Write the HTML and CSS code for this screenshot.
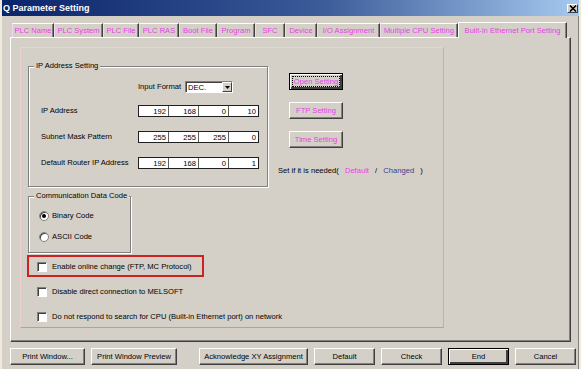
FILE: index.html
```html
<!DOCTYPE html>
<html>
<head>
<meta charset="utf-8">
<link rel="stylesheet" href="styles.css">
</head>
<body>
<div class="win">
  <div class="titlebar">
    <span class="title">Q Parameter Setting</span>
    <span class="close"><svg width="8" height="7" viewBox="0 0 8 7"><path d="M1 0.5 L7 6.5 M7 0.5 L1 6.5" stroke="#000" stroke-width="1.6"/></svg></span>
  </div>
  <div class="tabs">
    <div class="tab">PLC Name</div>
    <div class="tab">PLC System</div>
    <div class="tab">PLC File</div>
    <div class="tab">PLC RAS</div>
    <div class="tab">Boot File</div>
    <div class="tab">Program</div>
    <div class="tab">SFC</div>
    <div class="tab">Device</div>
    <div class="tab">I/O Assignment</div>
    <div class="tab">Multiple CPU Setting</div>
    <div class="tab active">Built-in Ethernet Port Setting</div>
  </div>
  <div class="panel">
    <div class="frame">
      <div class="toprow">
        <div class="grp ipgrp">
          <div class="lg">IP Address Setting</div>
          <div class="fmtrow">
            <span>Input Format</span>
            <span class="combo"><span class="cval">DEC.</span><span class="carrow"><svg width="5" height="3" viewBox="0 0 5 3"><path d="M0 0 H5 L2.5 3 Z" fill="#000"/></svg></span></span>
          </div>
          <div class="iprows">
            <span class="iplbl">IP Address</span>
            <span class="octs"><span class="oct">192</span><span class="oct">168</span><span class="oct">0</span><span class="oct">10</span></span>
            <span class="iplbl">Subnet Mask Pattern</span>
            <span class="octs"><span class="oct">255</span><span class="oct">255</span><span class="oct">255</span><span class="oct">0</span></span>
            <span class="iplbl">Default Router IP Address</span>
            <span class="octs"><span class="oct">192</span><span class="oct">168</span><span class="oct">0</span><span class="oct">1</span></span>
          </div>
        </div>
        <div class="side">
          <div class="sbtn focus"><span class="ftext">Open Setting</span></div>
          <div class="sbtn">FTP Setting</div>
          <div class="sbtn">Time Setting</div>
          <div class="note">Set if it is needed( <span class="def">Default</span> / <span class="chg">Changed</span> )</div>
        </div>
      </div>
      <div class="grp commgrp">
        <div class="lg">Communication Data Code</div>
        <div class="radio"><span class="rb on"></span><span>Binary Code</span></div>
        <div class="radio"><span class="rb"></span><span>ASCII Code</span></div>
      </div>
      <div class="hl">
        <div class="chk"><span class="cb"></span><span>Enable online change (FTP, MC Protocol)</span></div>
      </div>
      <div class="chk row2"><span class="cb"></span><span>Disable direct connection to MELSOFT</span></div>
      <div class="chk row3"><span class="cb"></span><span>Do not respond to search for CPU (Built-in Ethernet port) on network</span></div>
    </div>
  </div>
  <div class="btns">
    <div class="btn w75">Print Window...</div>
    <div class="btn w86">Print Window Preview</div>
    <div class="btn w109 gapl">Acknowledge XY Assignment</div>
    <div class="btn w60">Default</div>
    <div class="btn w60">Check</div>
    <div class="btn w60 dflt">End</div>
    <div class="btn w60">Cancel</div>
  </div>
</div>
</body>
</html>
```
FILE: styles.css
```css
* { box-sizing: border-box; }
html, body { margin: 0; padding: 0; background: #d4d0c8; }
body { font-family: "Liberation Sans", Arial, sans-serif; font-size: 7.6px; line-height: 10px; color: #000; }
.win {
  width: 581px; height: 369px; background: #d4d0c8;
  border-left: 2px solid #efeadb; border-right: 2px solid #efeadb;
  box-shadow: inset -1px 0 0 #808080;
  overflow: hidden;
}
.titlebar {
  height: 16px; display: flex; align-items: center; justify-content: space-between;
  background: linear-gradient(to right, #0a246a 0%, #3a5a98 55%, #a6caf0 100%);
  margin-left: -2px; margin-right: -2px; padding: 0 3px 0 3px;
}
.title { color: #fff; font-weight: bold; font-size: 9px; }
.close {
  width: 11px; height: 9px; background: #d4d0c8; display: flex; align-items: center; justify-content: center;
  border: 1px solid; border-color: #fff #404040 #404040 #fff;
}
.tabs {
  display: grid; grid-template-columns: 42px 49px 36px 40px 38px 38px 30px 32px 63px 78px 109px;
  align-items: end; margin: 6px 0 0 10px; height: 15px; position: relative; z-index: 2;
}
.tab {
  height: 14px; color: #e83ee8; text-align: center; white-space: nowrap; padding-top: 2px;
  border-top: 1px solid #fff; border-left: 1px solid #f4d8f0; border-right: 1px solid #404040;
  box-shadow: inset -1px 0 0 #808080;
}
.tab.active { height: 16px; margin-bottom: -1px; background: #d4d0c8; padding-top: 3px; border-left-color: #fff; }
.panel {
  margin: 0 0 0 8px; width: 561px; height: 305px;
  border: 1px solid; border-color: #fff #404040 #404040 #fff;
  box-shadow: inset -1px -1px 0 #808080;
}
.frame {
  margin: 9px 0 0 9px; width: 424px; height: 281px;
  border: 1px solid; border-color: #ecd0d0 #b8b4ae #a8a4a0 #ecd0d0;
}
.toprow { display: flex; margin: 18px 0 0 7px; }
.grp { border: 1px solid #808080; box-shadow: 1px 1px 0 #fff, inset 1px 1px 0 #fff; }
.lg { width: max-content; margin: -6px 0 0 5px; padding: 0 2px; background: #d4d0c8; line-height: 10px; }
.ipgrp { width: 240px; height: 121px; }
.fmtrow { display: flex; align-items: center; gap: 4px; margin: 10px 0 0 109px; height: 12px; }
.combo { display: flex; width: 48px; height: 12px; background: #fff; border: 1px solid; border-color: #808080 #fff #fff #808080; box-shadow: inset 1px 1px 0 #404040; }
.cval { flex: 1; padding: 1px 0 0 2px; }
.carrow { width: 10px; height: 10px; margin-top: 0; background: #d4d0c8; display: flex; align-items: center; justify-content: center; border: 1px solid; border-color: #fff #404040 #404040 #fff; }
.iprows { display: grid; grid-template-columns: 97px 121px; row-gap: 14px; margin: 12px 0 0 12px; align-items: center; }
.iplbl { white-space: nowrap; }
.octs { display: flex; height: 12px; border: 1px solid #202020; background: #fff; }
.oct { flex: 1; text-align: right; padding: 1px 2px 0 0; border-right: 1px solid #606060; }
.oct:last-child { border-right: none; }
.side { margin: 7px 0 0 10px; display: flex; flex-direction: column; align-items: flex-start; }
.sbtn {
  margin-left: 11px; width: 54px; height: 17px; color: #e83ee8; display: flex; align-items: center; justify-content: center;
  border: 1px solid; border-color: #fff #404040 #404040 #fff; box-shadow: inset -1px -1px 0 #808080; margin-bottom: 12px;
}
.sbtn.focus { border: 1px solid #000; box-shadow: inset 1px 1px 0 #fff, inset -2px -2px 0 #404040; }
.ftext { outline: 1px dotted #000; padding: 0 1px; line-height: 9px; }
.note { margin-top: 6px; white-space: nowrap; }
.def { color: #e83ee8; margin: 0 4px; }
.chg { color: #404090; margin: 0 4px; }
.commgrp { width: 103px; height: 57px; margin: 9px 0 0 7px; padding-top: 0; }
.radio { display: flex; align-items: center; gap: 3px; height: 12px; margin: 9px 0 0 10px; }
.radio + .radio { margin-top: 9px; }
.rb { width: 10px; height: 10px; border-radius: 50%; background: #fff; border: 1px solid #808080; box-shadow: inset 1px 1px 0 #404040; display: flex; align-items: center; justify-content: center; }
.rb.on::after { content: ""; width: 4px; height: 4px; border-radius: 50%; background: #000; }
.hl { margin: 2px 0 0 6px; width: 177px; height: 22px; border: 2px solid #cc2222; padding: 4px 0 0 8px; }
.chk { display: flex; align-items: center; gap: 5px; height: 12px; white-space: nowrap; }
.row2 { margin: 9px 0 0 16px; }
.row3 { margin: 13px 0 0 16px; }
.cb { width: 10px; height: 10px; background: #fff; border: 1px solid; border-color: #808080 #fff #fff #808080; box-shadow: inset 1px 1px 0 #404040; }
.btns { display: flex; gap: 6px; margin: 6px 0 0 8px; }
.btn {
  height: 17px; display: flex; align-items: center; justify-content: center; white-space: nowrap;
  border: 1px solid; border-color: #fff #404040 #404040 #fff; box-shadow: inset -1px -1px 0 #808080;
}
.btn.dflt { border: 1px solid #000; box-shadow: inset 1px 1px 0 #fff, inset -2px -2px 0 #404040; }
.w75 { width: 75px; }
.w86 { width: 86px; }
.w109 { width: 109px; }
.w60 { width: 61px; }
.gapl { margin-left: 16px; }
```
